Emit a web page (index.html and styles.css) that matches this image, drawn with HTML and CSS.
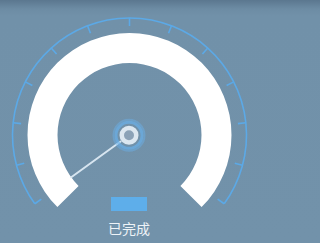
FILE: index.html
```html
<!DOCTYPE html>
<html lang="zh">
<head>
<meta charset="utf-8">
<title>已完成</title>
<link rel="stylesheet" href="styles.css">
</head>
<body>
<main class="screen">
  <svg class="gauge" viewBox="0 0 264 190" width="264" height="190">
    <path class="ring" d="M34.84 203.77 A117 117 0 1 1 224.16 203.77"/>
    <g class="ticks">
      <line x1="129.5" y1="18" x2="129.5" y2="26" transform="rotate(-126 129.5 135)"/>
      <line x1="129.5" y1="18" x2="129.5" y2="26" transform="rotate(-105 129.5 135)"/>
      <line x1="129.5" y1="18" x2="129.5" y2="26" transform="rotate(-84 129.5 135)"/>
      <line x1="129.5" y1="18" x2="129.5" y2="26" transform="rotate(-63 129.5 135)"/>
      <line x1="129.5" y1="18" x2="129.5" y2="26" transform="rotate(-42 129.5 135)"/>
      <line x1="129.5" y1="18" x2="129.5" y2="26" transform="rotate(-21 129.5 135)"/>
      <line x1="129.5" y1="18" x2="129.5" y2="26"/>
      <line x1="129.5" y1="18" x2="129.5" y2="26" transform="rotate(21 129.5 135)"/>
      <line x1="129.5" y1="18" x2="129.5" y2="26" transform="rotate(42 129.5 135)"/>
      <line x1="129.5" y1="18" x2="129.5" y2="26" transform="rotate(63 129.5 135)"/>
      <line x1="129.5" y1="18" x2="129.5" y2="26" transform="rotate(84 129.5 135)"/>
      <line x1="129.5" y1="18" x2="129.5" y2="26" transform="rotate(105 129.5 135)"/>
      <line x1="129.5" y1="18" x2="129.5" y2="26" transform="rotate(126 129.5 135)"/>
    </g>
    <path class="band" d="M57.4 207.1 A102 102 0 1 1 201.6 207.1 L180.41 185.91 A72 72 0 1 0 78.59 185.91 Z"/>
    <line class="needle" x1="120.6" y1="141.5" x2="71.25" y2="177.3"/>
    <circle class="glow-outer" cx="129" cy="135.3" r="15.5"/>
    <circle class="glow" cx="129" cy="135.3" r="13"/>
    <circle class="knob" cx="129" cy="135.3" r="7.25"/>
  </svg>
  <div class="bar"></div>
  <p class="label">已完成</p>
</main>
</body>
</html>
```

FILE: styles.css
```css
html, body {
  margin: 0;
  padding: 0;
}
body {
  width: 264px;
  height: 243px;
  overflow: hidden;
  background: linear-gradient(#5b778f 0, #6d8ca4 9px, #7191a9 16px, #7292aa 100%);
  font-family: "Noto Sans CJK SC", "Noto Sans", sans-serif;
}
.screen {
  display: flex;
  flex-direction: column;
  align-items: center;
  padding-right: 6px;
}
.gauge {
  display: block;
  align-self: flex-start;
  overflow: visible;
}
.ring {
  fill: none;
  stroke: #5ca9e6;
  stroke-width: 1.6;
}
.ticks line {
  stroke: #5ca9e6;
  stroke-width: 1.6;
}
.band {
  fill: #ffffff;
}
.needle {
  stroke: #d7e5f0;
  stroke-width: 2;
  stroke-linecap: round;
}
.glow-outer {
  fill: none;
  stroke: #6ab1ea;
  stroke-width: 2;
  opacity: 0.45;
}
.glow {
  fill: none;
  stroke: #6ab1ea;
  stroke-width: 3;
  opacity: 0.7;
}
.knob {
  fill: #8ba2b7;
  stroke: #dce7f0;
  stroke-width: 4.5;
}
.bar {
  margin-top: 7px;
  width: 36px;
  height: 14px;
  background: #5eaeea;
}
.label {
  margin: 10px 0 0;
  font-size: 14px;
  line-height: 14px;
  color: #eef3f7;
}
```
